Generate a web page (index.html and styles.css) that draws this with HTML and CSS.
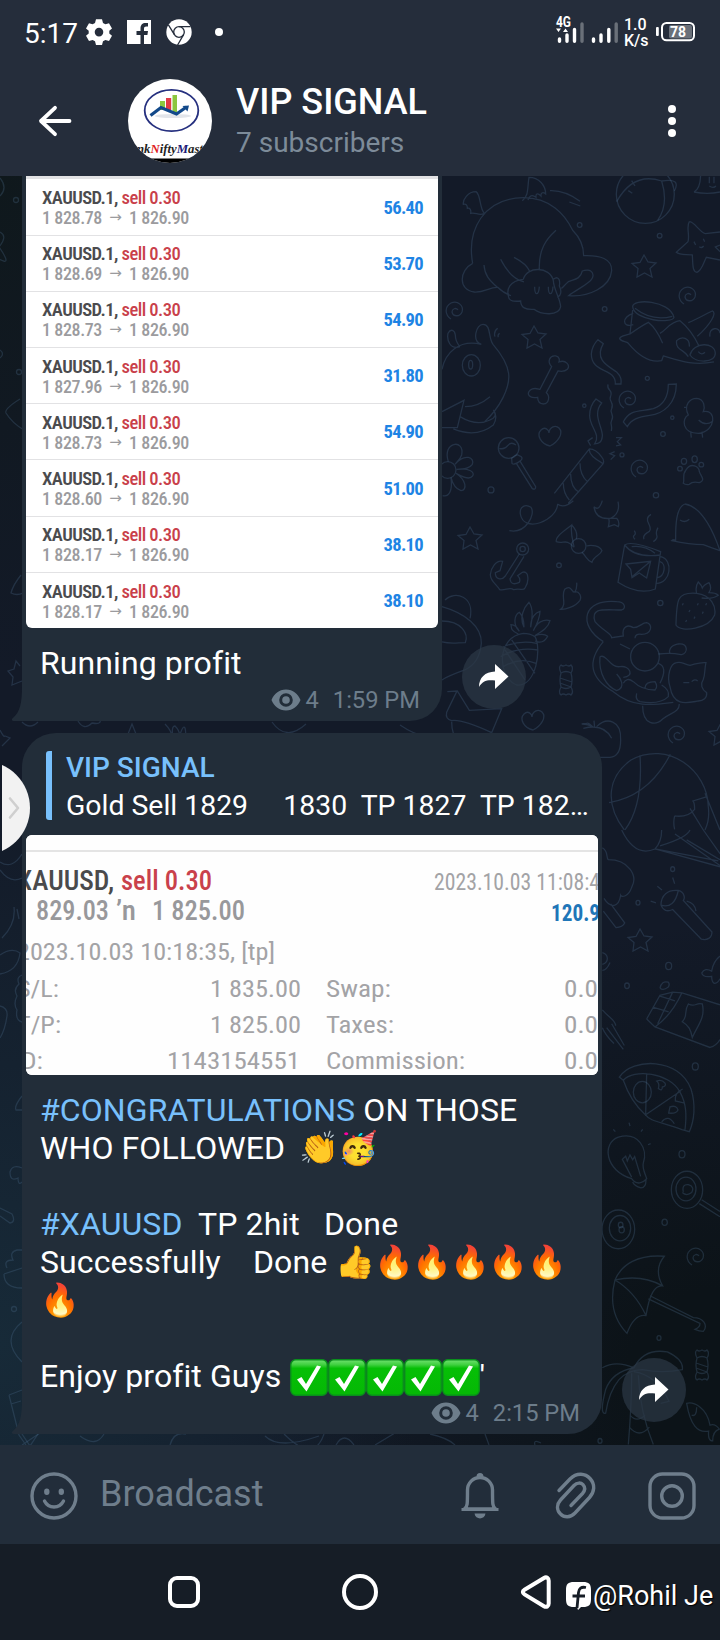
FILE: index.html
```
<!DOCTYPE html>
<html lang="en">
  <head>
    <meta charset="UTF-8" />
    <meta name="viewport" content="width=device-width, initial-scale=1.0" />
    <title>VIP SIGNAL</title>
    <link rel="stylesheet" href="styles.css">
  </head>
  <body>
    <header class="header">
      <div class="status-bar">
        <span class="time">5:17</span>
        <svg class="status-icons" width="140" height="32" viewBox="84 16 140 32">
          <path fill="#fff" fill-rule="evenodd" d="M96 19.3h6l1 3.6 2.4 1.4 3.6-1 3 5.2-2.7 2.3v2.6l2.7 2.3-3 5.2-3.6-1-2.4 1.4-1 3.6h-6l-1-3.6-2.4-1.4-3.6 1-3-5.2 2.7-2.3v-2.6L86 28.500l3-5.200 3.600 1 2.400-1.400zM99 27.800a4.300 4.300 0 1 0 0 8.600 4.300 4.300 0 0 0 0-8.600z" />
          <rect x="127" y="20" width="24" height="24" fill="#fff" />
          <path fill="#252d3b" d="M140.500 44v-9h-4v-4h4v-2.500c0-3.700 2-5.500 5-5.500h2.500v3.500h-1.800c-1.500 0-2.200.7-2.200 2.200V31h4l-.6 4H144v9z" />
          <circle cx="179" cy="32" r="12.700" fill="#fff" />
          <g fill="none" stroke="#252d3b" stroke-width="1.300">
            <circle cx="179" cy="32" r="5.300" />
            <path d="M179 26.700h11.500M174.400 34.700l-6-9.800M183.600 34.700l-6 10.300" />
          </g>
          <circle cx="219" cy="32" r="4" fill="#fff" />
        </svg>
        <svg class="signal" width="66" height="34" viewBox="554 12 66 34">
          <text x="556" y="27" class="net-type" textLength="15" lengthAdjust="spacingAndGlyphs">4G</text>
          <path fill="#fff" d="M556 28.500h5l-2.500 3.500zM563 32h5l-2.500-3.500z" />
          <g stroke="#fff" stroke-width="3.400" stroke-linecap="round">
            <path d="M559.500 39v2.300M567 35v6.300M574.500 29.500v11.800M593.500 39v2.300M601 35v6.300M608.800 29.500v11.800" />
            <path d="M582 24v17.300M616.200 24v17.300" stroke="#6a7079" />
          </g>
        </svg>
        <span class="speed">1.0<br>K/s</span>
        <svg class="battery" width="42" height="22" viewBox="655 20 42 22">
          <rect x="656" y="27" width="2.800" height="9" rx="1" fill="#fff" />
          <rect x="662" y="23" width="32" height="17.300" rx="4.500" fill="none" stroke="#fff" stroke-width="2" />
          <rect x="669" y="25" width="23" height="13.500" rx="2" fill="#6a7079" />
          <text x="678" y="37" class="battery-level" text-anchor="middle">78</text>
        </svg>
      </div>

      <div class="toolbar">
        <svg class="back" width="34" height="32" viewBox="0 0 34 32">
          <path d="M31.500 16H3M17 2.800L3 16l14 13.200" fill="none" stroke="#fff" stroke-width="3.800" stroke-linecap="round" stroke-linejoin="round" />
        </svg>
        <svg class="avatar" width="84" height="84" viewBox="128 79 84 84">
          <rect x="128" y="79" width="84" height="84" fill="#fff" />
          <ellipse cx="171.500" cy="110.500" rx="26.800" ry="20.700" fill="#fff" stroke="#26307f" stroke-width="1.800" />
          <ellipse cx="173" cy="116" rx="18" ry="2" fill="#e2e5ea" />
          <path fill="#8cc63f" d="M160 101h5v9h-5zM172.500 95h4.500v18h-4.500z" />
          <path fill="#e23a45" d="M166 98h5.200v12H166z" />
          <path d="M150.500 115.500l10.500-8 15.500 6.500 10-7" fill="none" stroke="#12498a" stroke-width="3.200" />
          <path fill="#12498a" d="M182.500 106l6.500-.5-1.500 6z" />
          <text class="avatar-text" x="137" y="152.500" textLength="66" lengthAdjust="spacingAndGlyphs">nk<tspan fill="#e01b22">N</tspan>ifty<tspan fill="#1a1a78">M</tspan>ast</text>
          <rect x="128" y="158.500" width="84" height="5" fill="#000" />
        </svg>
        <div class="chat-title">
          <h1>VIP SIGNAL</h1>
          <p>7 subscribers</p>
        </div>
        <div class="menu"><i></i><i></i><i></i></div>
      </div>
    </header>

    <main class="chat">
      <svg class="wallpaper" width="720" height="1269" viewBox="0 176 720 1269">
        <defs>
          <path id="star" d="M0-11l4 7 8 1-6 5.500 2 8.500-7.500-4L-7 11l1-8.500-6-5 8-1z" />
          <path id="spiral" d="M-5 9c-6-4-7-12 0-16 7-3 13 3 11 9-2 5-9 5-10 0 0-3 4-5 6-2" />
          <path id="heart" d="M0 11C-9 9-14 0-9-5c4-4 8 0 8 3 0-5 6-9 10-5 5 5-1 14-9 18z" />
          <g id="candy">
            <path d="M-5-7q5-3 10 0 2 7 0 14-5 3-10 0-2-7 0-14zM-5-7q-3-6 0-8 2 2 5 0 3 2 5 0 3 3 0 8M-5 7q-3 6 0 8 2-2 5 0 3-2 5 0 3-3 0-8M-6-2l12 4M-6 3l11 4" />
          </g>
        </defs>

        <g transform="translate(440 170) scale(.3333)">
          <!-- winged elephant -->
          <path d="M98 280C80 180 130 85 250 83c80 0 125 50 148 98 25 25 33 50 33 76 50-2 85 10 84 45-4 50-70 80-129 75 25-20 75-40 73-62-3-20-25-15-32-12-5 25-25 25-42 32-12 10-16 18-21 20M98 280c-40 20-45 80 5 86 30 2 45-15 70-14 10 10 25 20 40 25M298 298c-2-60 20-90 50-117M132 285c2 30 15 45 40 67M182 268c15 30 40 60 70 68M222 262c20 10 40 25 48 43M250 328c10-40 80-40 90 4 2 30 20 50 22 78-5 30-60 24-80 8-25 2-40-5-40-25-20 2-35 2-37-15-5-20 2-45 45-50M284 350c0 28 12 28 14 0M325 350c0 28 12 28 14 0M340 328c20-15 20 10 18 20 8 15 5 30-6 34M133 130c-15-15-10-55-25-65-25 0-40 25-38 38 10-2 12 5 12 12 8-2 12 5 10 15 15-5 25 10 41 0zM247 92c20-15 15-40 20-70 30 0 50 25 50 50-10-8-15-2-14 6-12-12-16-5-15 4-12-10-20-5-24 8M330 62q45-2 90 32M388 96l33 12" />
          <!-- beach ball -->
          <circle cx="616" cy="73" r="87" />
          <path d="M530 95q50-90 135-62 60-10 38 30M665 33q22 70-12 118M575 32l10 16M565 62l12 8" />
          <!-- ghost, starfish, jar -->
          <path d="M762 66q20-10 20-55M762 66q40 8 78 0M808 20v20M822 20v20M808 48q12 8 20 0M748 155c15 0 30 30 48 36l44-5M748 155c-10 15 2 40-4 60l-35 32c10 10 35 5 48 8 2 30 0 50 14 52 15-5 20-30 28-45l41 8M840 225l-14 6 14 14M762 215l5 10M790 206l4 9M778 230q7 6 13-2" />
          <path d="M578 410c0-25 110-20 124 32-5 20-120 10-124-32zM585 415q50 40 112 24M578 420l-8 72M570 492c-15 5-30 5-31 14 5 10 20 8 26 14 25 30 60 60 100 52l5-14c50 15 90 30 152 18M570 492q35-25 55-35 25 20 43 63M580 430c-35 10-35 45 0 34M660 490c20-10 30-35 60-38 25 20 45 50 57 76M745 458c25-10 60-30 72-35 15 5-5 40-45 76M750 555c10-40 75-40 76-5 0 30-60 30-76 5zM745 560c-10-20-40-20-35-48 15-15 40-10 38 18M810 500c-5-30 30-30 30-10M775 545q10 12 20 2" />
          <!-- bird with cup -->
          <path d="M6 598c10-50 50-90 118-75-30-10-15-60 5-60 25 0 15 40 30 60 60 70 55 110 30 160q-20 40-55 72M60 530c-30 10-40-20-36-40 8-15 20-10 22 5q0 20 14 35M6 725l66-34-20 82H6M75 710q40 0 75-30M60 740q50 30 90 10 25-10 10-30 15 20 0 45-50 40-120 12M165 500q-5-15 8-25M175 502q-3-8 4-12" />
          <ellipse cx="94" cy="586" rx="27" ry="32" />
          <ellipse cx="92" cy="584" rx="6" ry="13" />
          <!-- bone -->
          <path d="M335 590c-15-15-5-35 12-32 12 2 12 12 10 18 20-8 35 10 25 22-8 8-22 6-28 5l-35 65c12 10 8 32-8 34-15 0-18-10-18-20-25 5-35-10-22-22 10-8 20-4 29-2z" />
          <!-- ribbons, lollipop, firecracker -->
          <path d="M474 509l16 12c-30 50 20 70 40 85 15 15 14 25 13 36h-17c2-50-72-30-72-90q2-25 20-43zM685 643l24-1c0 60-40 90-80 94-35 5-55 12-67 34l-12-14c20-40 50-30 90-40 30-10 45-35 45-73zM468 687l17 12c-30 35 5 75 2 100-2 20-12 22-23 23 20-30-15-50-15-85q0-30 19-50zM504 643c-5 20 16 15 8 35-8 15 12 20 3 38-8 12 10 20 0 35-6 12 4 18-1 32" />
          <circle cx="206" cy="834" r="31" />
          <path d="M178 835q15 5 25-8t25-2M215 865q15-15 22-8 15 5 5 15-20 15-26 8zM229 880l48 76q10 5 10-6l-46-75M343 970l105-133q20 0 38 25 8 10 3 20L385 1000M448 837q-3 20 40 43M420 880q0 35 22 55M392 912q0 40 25 55M370 940q0 30 18 50M458 803l-14 10 8 14M528 803h16l-12 12 10 10-14 3M524 845l-14 6 14 6-12 12" />
          <!-- chick, flower, paw -->
          <path d="M745 735c-15-30 5-50 25-50 25 2 25 30 20 40 40-10 40 60-15 65-50 0-50-45-30-55zM776 750q20 20 42 4M740 712h-8M752 785l2 18M786 785l2 18" />
          <circle cx="23" cy="900" r="25" />
          <path d="M25 875c-20-60 50-70 40-20-5 15-15 22-20 28 30-35 60-20 52 0-8 12-30 15-47 15 40-5 55 10 48 20-10 15-35 0-50-8 30 20 35 50 15 52-15-5-25-20-30-40 5 40-5 60-25 55" />
          <path d="M730 940c5-15-5-25 8-40 15-25 40-10 40 5 5 15 20 25 0 33q-20-5-30 5-10 3-18-3z" />
          <ellipse cx="732" cy="874" rx="8" ry="9" /><ellipse cx="764" cy="868" rx="8" ry="10" /><circle cx="784" cy="884" r="7" /><circle cx="720" cy="896" r="7" />
          <circle cx="419" cy="165" r="7" /><circle cx="659" cy="197" r="7" /><circle cx="494" cy="417" r="7" /><circle cx="622" cy="625" r="6" /><circle cx="669" cy="792" r="7" /><circle cx="546" cy="855" r="6" /><circle cx="153" cy="960" r="9" /><circle cx="648" cy="976" r="8" /><circle cx="433" cy="707" r="5" /><circle cx="697" cy="743" r="5" />
        </g>
        <use href="#star" x="644" y="266" /><use href="#star" x="534" y="337" />
        <use href="#spiral" x="456" y="310" /><use href="#spiral" x="689" y="295" /><use href="#spiral" x="629" y="399" /><use href="#spiral" x="641" y="468" />
        <use href="#heart" x="550" y="435" />

        <g transform="translate(440 500) scale(.3333)">
          <!-- string, fish, bow tie -->
          <path d="M208 92c50 10 80-50 65-70-15-10-35-5-32 20 10 60 110 20 112-30M352 12q20 15 48-10M462 20q5 40 50 35 30-15 22-50M462 20q15 15 25-18M505 80q5-20 0-25h25q10 10 5 25l-12-6zM395 75c-25 20-50 35-46 50 20 8 30-10 50 14 10 10-10-30-4-64zM395 75q20 20 14 42M440 138c15-5 40 0 46 14-5 15-25 15-30 35-15-5-15-15-30-30" />
          <circle cx="416" cy="138" r="22" />
          <!-- mug -->
          <path d="M554 135q20-15 108 20l-16 112q-50 20-112-20zM554 135q30 40 108 30M575 140q40-5 70 20M662 170c40 10 30 80-12 80M660 185c20 5 15 45-8 48M558 192l74-8-12 50-22-15-22 14-4-25zM632 184l-56 46M585 118q-8-8-2-12 6-5 0-14M612 118q-5-10 10-20 15-5 5-25-12-20 6-30M640 125q15-10 10-20-3-10 4-22" />
          <!-- anchor -->
          <circle cx="248" cy="147" r="18" /><circle cx="248" cy="147" r="8" />
          <path d="M238 162l-42 66c-12 15-30 10-30-10l14-6 8-28c-20-5-35 20-37 40 0 20 20 30 28 45 15 5 30-10 42 0 20-5 30 5 34-5 10-15 10-25 8-35 0-10-8-15-16-12l-14 10q10 10 5 20-25 12-28-10l42-68" />
          <!-- cake, leaf, strawberry -->
          <path d="M735 12c-30 10-28 80-28 110M735 12q60 10 105 140-30-10-50-18-40 0-95-12 5-5 12-1M720 60q15 10 28-2M362 328c20-15 0-40 12-60 15-12 20 0 26 8 20-5 25 15 20 25-15 20-45 28-58 27zM410 248q2 15-6 30M770 280c-60-5-60 20-62 95 15 25 100 10 116-30 5-25-10-60-54-65zM770 280q-5-20 5-34 10 10 12 18 5-10 20-16 10 15 0 30 20 0 28 8-15 12-50 8M730 310l-3 6M750 330l-3 6M775 310l-3 6M740 360l-3 6M765 350l-3 6M790 335l-3 6M800 310l-3 6" />
          <!-- pineapple -->
          <path d="M250 400c-80 10-80 130-20 155 60 5 75-110 55-145q-15-10-35-10zM235 402c-25-10-20-20-22-28 12 0 20 10 25 20-20-20-15-50 0-57 10 10 14 30 14 45-15-30 0-60 15-75 12 15 12 40 5 75 0-30 15-45 28-48 0 20-10 40-20 58 10-25 30-35 50-30-5 20-20 30-45 45 15-5 30-5 38 2-10 20-25 20-38 14M190 440q50-20 100-10M182 470q50-30 112-20M190 500q50-30 98-10M215 420l70 100M195 450l60 90" />
          <!-- bear and letter -->
          <path d="M15 300c30-30 90-10 75 55M6 320c70 20 120 60 118 110q-5 60-50 80Q20 530 6 540M6 363c60 0 80 40 70 65-25 0-40 5-70-2M22 575l30-2 36 58 97-5-30 72M50 575l-30 62q-5 20 15 25 30-5 120 36M35 665q0 20 5 35" />
          <!-- cat on its back -->
          <path d="M490 425c-80-50-60-130 40-120 25 0 30 20 15 25-50 0-95-10-80 35 20 25 50 35 50 48l35-5c-5-30 15-35 30-25 20 0 25-15 40-15 20 5 15 35-15 35q-20-3-20 12M490 425c-50 60-40 110 30 150 60 50 120 40 180 32M480 470c20-10 30 35 60 30 30-5 45 30 10 32M480 470c-5 50 20 90 50 102 30-10 10-40 0-50M540 432l30 15M655 462c40-5 60 0 70 2 20-5 20-35-10-32-25 5-30 20-25 30M690 560c-10-30 0-70 20-72 15-5 20 5 40 8 20-5 30-10 48-8-5 20-2 35-8 50-10 15-5 30 10 40 2 15-10 25-25 25-30 5-75 20-85-43zM608 617c0 60 40 60 60 40 25-20 50-20 50-45M550 550q10-20 30-5 25 25 65 25 10-10 0-25-30 0-30 20M590 580q-5 20 10 25 60 10 85-15 5-20-20-35M655 490q30 10 5 60M730 548h18M755 545q10-10 18-2" />
          <circle cx="615" cy="470" r="43" />
          <!-- peach, football -->
          <path d="M430 685c40-10 70 0 85 30M425 672q20 0 35 10-15-15-20-12-10 0-15 2M462 662l2 22M470 680c30-30 75-20 72 40q0 50-32 52h-30" />
          <path d="M553 990c-60-80-50-160 20-210 110-60 230 30 232 140 5 40-5 60-10 70M507 908q120-20 184-145M600 766q10 150-45 224M704 948q-5 20 0 40M704 948q40 5 60-20 0-20-5-25l40-12M795 880l45 110M750 925l40 65" />
          <circle cx="357" cy="196" r="7" /><circle cx="661" cy="309" r="8" />
        </g>
        <use href="#star" x="470" y="538" /><use href="#heart" x="533" y="719" />
        <use href="#spiral" x="678" y="734" /><use href="#star" x="721" y="734" />
        <use href="#candy" x="566" y="680" />

        <g transform="translate(560 830) scale(.3333 .3954)">
          <!-- parachute, tree, torch -->
          <path d="M185 0q40 70 100 48l195 45M305 0q0 30-20 48M300 40q80-20 90-40M285 48l190 30M345 10l135 80M380 25l100 50M430 0l50 60M127 45c20 10 10 25 18 30 60 0 90 40 70 70-10 25-30 25-33 20-5 30-30 35-50 8M130 205l38 42q20-2 26-12l-42-48M303 190c0-25 20-40 52-37 20 5 20 20 15 25l86 80c0 15-15 22-32 18l-86-75q-25 10-35-11zM303 190q40 10 52-37M380 180q25 5 28 25M338 120l6 16M292 142l14 10M272 180l16 4M127 310c20 5 20 25 0 30M150 335q-10 20-23 20" />
          <!-- chocolate, whale -->
          <path d="M260 478l40-60 38-8 28 2 114 30M260 478l25 20 165 52q20-5 30-20M285 498q50-30 80-85M300 420l45 12M278 448l48 12M338 410l-45 80M385 440c-15 20 0 30-18 45 20 10 25 20 30 40 15-30 40-50 30-85-20-5-20 10-42 0zM425 362q10-15 30-5 5-25 25-38M425 362q5 12 30 8 0 15 8 18 10 0 17-12M300 400q5-20 25-15 5 5 0 12-15 10-25 3M127 455c20 20 40 25 40 40M140 500l50 55M155 490l38 55M127 500q10 20 35 40" />
          <!-- pizza -->
          <path d="M178 625c40-50 180-50 215 30 15 40 10 80-5 108l-22-5c-60-20-95-20-110-38-40-30-55-60-66-87zM190 633c30-30 140-20 170 30 20 30 20 60 15 95M260 615l-3 105 105-60M290 635q15-5 25 5 5 8-8 10 0 12-12 4 5-12-5-19zM330 700q20-5 24 8-5 10-28 8zM305 738q20-20 38 5M368 655q-25 10-22 30l25 5" />
          <circle cx="247" cy="663" r="27" />
          <!-- light bulb, lollipop -->
          <path d="M215 882c-80-20-90-90-40-105 60-15 90 30 75 65-5 15 10 35 10 40-10 10-30 18-45 0zM215 878l-28-45 10-8 5 12 8-15 8 12 6-8 18 50M218 890q5 10 25 15 15 0 15-20M160 757l6 6M207 740l3 9M248 757l-5 6M272 793l-8 3" />
          <circle cx="381" cy="910" r="47" /><circle cx="378" cy="908" r="30" />
          <path d="M370 915q-5-20 15-18 20 5 10 20-15 10-28 0M425 935l55 30M418 945l62 33" />
          <!-- eight ball, umbrella -->
          <circle cx="175" cy="1010" r="49" /><circle cx="180" cy="1007" r="32" /><circle cx="182" cy="999" r="7" /><circle cx="185" cy="1011" r="8" />
          <path d="M165 1138c20-40 70-65 148-60-20 20-25 45-5 75q-35-5-50 75-35-5-57 45c-45-40-50-90-36-135zM165 1138q80-15 143 15M165 1138q60 30 93 90M270 1178l130 55c30 0 45 20 30 35q-12 0-25-5 15-5 15-15l-155-62" />
          <!-- palm tree, fish -->
          <path d="M127 1360q40-20 95 0 30-50 100-40 50 20 45 45-60 10-120 0-40 0-70 25-30 30-40 85-20 5 0-60 20-45 85-55M222 1370q70 10 105 75l-25 5M205 1554q10-100 10-180M280 1554q-40-80-45-175M210 1480q20 20 45 0M208 1510q30 30 60 0M380 1450c20-5 60 10 70 55q15-5 28 10-20 5-20 30-15 0-12-25-50 10-66-70zM395 1480q15 5 15-20" />
          <circle cx="338" cy="99" r="6" /><circle cx="234" cy="184" r="6" /><circle cx="326" cy="344" r="9" /><circle cx="201" cy="394" r="7" /><circle cx="406" cy="598" r="9" /><circle cx="366" cy="820" r="9" /><circle cx="314" cy="992" r="8" /><circle cx="297" cy="1285" r="6" /><circle cx="120" cy="1545" r="6" />
        </g>
        <use href="#star" x="640" y="940" /><use href="#spiral" x="697" y="1256" /><use href="#candy" x="702" y="1365" />

        <!-- left edge -->
        <path d="M0 178q8 10 0 18M0 232q8 4-1 15 14 20 0 12M20 399q-16 10-14 14 6 10 18 17M0 350q5 4 0 8M21 575q-8 10-10 18 6 3 12 0M0 730q4 8 5 6l5 2-8 8M20 666l-4-5-2 8-6 2 5 6-1 8 10-4" />
        <circle cx="16" cy="200" r="2.500" /><circle cx="19" cy="372" r="2.500" /><circle cx="14" cy="1309" r="2.500" />
        <path d="M0 870q10 14 22 8M0 862q12 8 22-8M2 938q14-14 12-31M17 909l2 10M0 955q12-8 20-2-2 18-20 21M22 975q-6 2-3 9-6 5-2 12-4 8 0 14-2 10 5 12M0 1006q8 2 7 10-2 14-7 22M22 1096q-8 10-6 14h6M22 1168q-10-4-12 4 0 10 8 6 0 8 4 4M0 1208l12 6q4 8-2 9l-10-7M4 1274q0 14 18 14M4 1274l18-6M7 1268q-4-8 6-8-4-8 4-10h5M22 1322q-22 18 0 40M9 1395l10 40 7 10M9 1395l13-5M11 1404l10-3M22 1445l18-12" />
        <path d="M22 722q8 8 16 0M78 721q6 10 14 2 10 2 8-4M128 734l4-10 4 10M165 724q6 6 8 14-2-12 2-12 6 6 4 12 4-14 6-10 2 8-2 10M272 722q14 20 34 2M400 725q18 12 26 10M284 1434q30 30 40 0M170 1445q4-14 16-11M22 1434l8 12 8-12M80 1436q16 12 24-2M265 1436q14 14 54 0M336 1445q8-14 18 0M375 1445l20-12M430 1434q18 4 25 11M485 1434l4 11M535 1445q-2-6 6-2" />
      </svg>

      <section class="message message-first">
        <div class="photo deals">
          <div class="deal">
            <div>
              <p class="deal-name">XAUUSD.1, <b>sell 0.30</b></p>
              <p class="deal-price"><span>1 828.78</span><i>→</i><span>1 826.90</span></p>
            </div>
            <strong>56.40</strong>
          </div>
          <div class="deal">
            <div>
              <p class="deal-name">XAUUSD.1, <b>sell 0.30</b></p>
              <p class="deal-price"><span>1 828.69</span><i>→</i><span>1 826.90</span></p>
            </div>
            <strong>53.70</strong>
          </div>
          <div class="deal">
            <div>
              <p class="deal-name">XAUUSD.1, <b>sell 0.30</b></p>
              <p class="deal-price"><span>1 828.73</span><i>→</i><span>1 826.90</span></p>
            </div>
            <strong>54.90</strong>
          </div>
          <div class="deal">
            <div>
              <p class="deal-name">XAUUSD.1, <b>sell 0.30</b></p>
              <p class="deal-price"><span>1 827.96</span><i>→</i><span>1 826.90</span></p>
            </div>
            <strong>31.80</strong>
          </div>
          <div class="deal">
            <div>
              <p class="deal-name">XAUUSD.1, <b>sell 0.30</b></p>
              <p class="deal-price"><span>1 828.73</span><i>→</i><span>1 826.90</span></p>
            </div>
            <strong>54.90</strong>
          </div>
          <div class="deal">
            <div>
              <p class="deal-name">XAUUSD.1, <b>sell 0.30</b></p>
              <p class="deal-price"><span>1 828.60</span><i>→</i><span>1 826.90</span></p>
            </div>
            <strong>51.00</strong>
          </div>
          <div class="deal">
            <div>
              <p class="deal-name">XAUUSD.1, <b>sell 0.30</b></p>
              <p class="deal-price"><span>1 828.17</span><i>→</i><span>1 826.90</span></p>
            </div>
            <strong>38.10</strong>
          </div>
          <div class="deal">
            <div>
              <p class="deal-name">XAUUSD.1, <b>sell 0.30</b></p>
              <p class="deal-price"><span>1 828.17</span><i>→</i><span>1 826.90</span></p>
            </div>
            <strong>38.10</strong>
          </div>
        </div>
        <p class="caption">Running profit</p>
        <div class="meta">
          <svg width="30" height="22" viewBox="0 0 30 22"><path fill="#6d7d8b" fill-rule="evenodd" d="M15 .5C8 .5 3 5 .5 11 3 17 8 21.500 15 21.500S27 17 29.500 11C27 5 22 .5 15 .5zM15 4.200a6.800 6.800 0 1 1 0 13.600 6.800 6.800 0 0 1 0-13.600zM15 7.200a3.800 3.800 0 1 0 0 7.600 3.800 3.800 0 0 0 0-7.600z" /></svg>
          <span class="views">4</span>
          <span>1:59 PM</span>
        </div>
        <svg class="tail" width="14" height="34" viewBox="0 0 14 34"><path fill="#222d39" d="M14 0h-4c0 16-2 25-9 31-2 1-1 3 1 3h12z" /></svg>
        <button class="share" aria-label="Share">
          <svg width="32" height="28" viewBox="0 0 32 28"><path fill="#fff" d="M17 1l13.500 12.500L17 26v-8.500C9 16.500 4.500 18 1 24 1 14.500 7 9 17 8.500z" /></svg>
        </button>
      </section>

      <section class="message message-second">
        <div class="reply">
          <p class="reply-name">VIP SIGNAL</p>
          <p class="reply-text">Gold Sell 1829     1830  TP 1827  TP 182…</p>
        </div>
        <svg class="photo order" width="572" height="240" viewBox="26 835 572 240">
          <rect x="26" y="835" width="572" height="240" fill="#fefefe" />
          <rect x="26" y="850" width="572" height="2" fill="#e4e4e4" />
          <g class="order-bold">
            <text x="17" y="890" font-size="28" fill="#4a4a4c" textLength="97" lengthAdjust="spacingAndGlyphs">XAUUSD,</text>
            <text x="121" y="890" font-size="28" fill="#c9414b" textLength="91" lengthAdjust="spacingAndGlyphs">sell 0.30</text>
            <text x="36" y="920" font-size="27" fill="#98989b" textLength="73" lengthAdjust="spacingAndGlyphs">829.03</text>
            <text x="116" y="920" font-size="27" fill="#98989b" textLength="20" lengthAdjust="spacingAndGlyphs">’n</text>
            <text x="152" y="920" font-size="27" fill="#98989b" textLength="93" lengthAdjust="spacingAndGlyphs">1 825.00</text>
            <text x="551" y="921" font-size="24" font-weight="700" fill="#1f76b8" textLength="49" lengthAdjust="spacingAndGlyphs">120.9</text>
          </g>
          <g class="order-grey">
            <text x="434" y="890" textLength="166" lengthAdjust="spacingAndGlyphs">2023.10.03 11:08:4</text>
            <text x="17" y="960" textLength="258" lengthAdjust="spacingAndGlyphs">2023.10.03 10:18:35, [tp]</text>
            <text x="17" y="997" textLength="42" lengthAdjust="spacingAndGlyphs">S/L:</text>
            <text x="210" y="997" textLength="91" lengthAdjust="spacingAndGlyphs">1 835.00</text>
            <text x="326" y="997" textLength="65" lengthAdjust="spacingAndGlyphs">Swap:</text>
            <text x="564" y="997" textLength="34" lengthAdjust="spacingAndGlyphs">0.0</text>
            <text x="17" y="1033" textLength="44" lengthAdjust="spacingAndGlyphs">T/P:</text>
            <text x="210" y="1033" textLength="91" lengthAdjust="spacingAndGlyphs">1 825.00</text>
            <text x="326" y="1033" textLength="68" lengthAdjust="spacingAndGlyphs">Taxes:</text>
            <text x="564" y="1033" textLength="34" lengthAdjust="spacingAndGlyphs">0.0</text>
            <text x="21" y="1069" textLength="22" lengthAdjust="spacingAndGlyphs">D:</text>
            <text x="167" y="1069" textLength="133" lengthAdjust="spacingAndGlyphs">1143154551</text>
            <text x="326" y="1069" textLength="139" lengthAdjust="spacingAndGlyphs">Commission:</text>
            <text x="564" y="1069" textLength="34" lengthAdjust="spacingAndGlyphs">0.0</text>
          </g>
        </svg>
        <svg class="defs" width="0" height="0">
          <defs>
            <linearGradient id="green" x1="0" y1="0" x2="0" y2="1">
              <stop offset="0" stop-color="#6fe06f" />
              <stop offset=".14" stop-color="#3fd03f" />
              <stop offset=".24" stop-color="#06bf06" />
              <stop offset="1" stop-color="#05b805" />
            </linearGradient>
            <g id="check">
              <rect x=".8" y=".8" width="36.500" height="35.500" rx="5" fill="url(#green)" stroke="#0a8f1c" stroke-width="1.400" />
              <path d="M7 20.500l4.500-2.500 4.500 7L27 6.500l4 1-14.500 25z" fill="#fff" />
            </g>
          </defs>
        </svg>
        <p class="caption"><a>#CONGRATULATIONS</a> ON THOSE
WHO FOLLOWED  <span class="emoji clap">👏🥳</span>

<a>#XAUUSD</a>  TP 2hit   Done
Successfully    Done <span class="emoji">👍🔥🔥🔥🔥🔥
🔥</span>

Enjoy profit Guys <svg class="check"><use href="#check" /></svg><svg class="check"><use href="#check" /></svg><svg class="check"><use href="#check" /></svg><svg class="check"><use href="#check" /></svg><svg class="check"><use href="#check" /></svg>'</p>
        <div class="meta">
          <svg width="30" height="22" viewBox="0 0 30 22"><path fill="#6d7d8b" fill-rule="evenodd" d="M15 .5C8 .5 3 5 .5 11 3 17 8 21.500 15 21.500S27 17 29.500 11C27 5 22 .5 15 .5zM15 4.200a6.800 6.800 0 1 1 0 13.600 6.800 6.800 0 0 1 0-13.600zM15 7.200a3.800 3.800 0 1 0 0 7.600 3.800 3.800 0 0 0 0-7.600z" /></svg>
          <span class="views">4</span>
          <span>2:15 PM</span>
        </div>
        <svg class="tail" width="14" height="34" viewBox="0 0 14 34"><path fill="#222d39" d="M14 0h-4c0 16-2 25-9 31-2 1-1 3 1 3h12z" /></svg>
        <button class="share" aria-label="Share">
          <svg width="32" height="28" viewBox="0 0 32 28"><path fill="#fff" d="M17 1l13.500 12.500L17 26v-8.500C9 16.500 4.500 18 1 24 1 14.500 7 9 17 8.500z" /></svg>
        </button>
      </section>

      <!-- edge panel handle -->
      <div class="edge-handle">
        <svg width="12" height="24" viewBox="0 0 12 24"><path d="M2 2.500l8 9.500-8 9.500" fill="none" stroke="#cfcfcf" stroke-width="2.600" stroke-linecap="round" stroke-linejoin="round" /></svg>
      </div>
    </main>

    <div class="composer">
      <svg width="48" height="48" viewBox="0 0 48 48" fill="none" stroke="#6f7e8c" stroke-width="3.400">
        <circle cx="24" cy="24" r="22" />
        <path d="M14.500 29c4 8 15 8 19 0" stroke-linecap="round" />
        <ellipse cx="16.800" cy="19.800" rx="2.700" ry="3.300" fill="#6f7e8c" stroke="none" />
        <ellipse cx="31.300" cy="19.800" rx="2.700" ry="3.300" fill="#6f7e8c" stroke="none" />
      </svg>
      <span class="placeholder">Broadcast</span>
      <svg width="40" height="48" viewBox="0 0 40 48">
        <path d="M4.500 36c3-2 3-5 3-19a12.500 12.500 0 0 1 25 0c0 14 0 17 3 19z" transform="translate(0 1)" fill="none" stroke="#6f7e8c" stroke-width="3.400" stroke-linejoin="round" />
        <path d="M16.500 4.500a3.400 3.400 0 0 1 7 0zM14.500 41.500h11c-1 6.500-10 6.500-11 0zM1.500 36h37v3h-37z" fill="#6f7e8c" />
      </svg>
      <svg class="clip" width="42" height="48" viewBox="555 1472 42 48">
        <path d="M559 1490.500l11-11.500c7-7 15.500-5.500 20-.5 5.500 6 4.500 13.500-.5 19l-14.500 15.500c-4.500 5-11 4.500-14.500 1-4-4-4-9.500 0-14l13.500-14.500c3-3.200 7-3 9-.8 2.500 2.800 2 6-.5 8.800L571 1505.500" fill="none" stroke="#6f7e8c" stroke-width="3.400" stroke-linecap="round" />
      </svg>
      <svg width="48" height="48" viewBox="0 0 48 48" fill="none" stroke="#6f7e8c" stroke-width="3.400">
        <rect x="2" y="2" width="44" height="44" rx="12.500" />
        <circle cx="24" cy="24" r="10.300" />
      </svg>
    </div>

    <nav class="nav-bar">
      <svg width="36" height="36" viewBox="0 0 36 36"><rect x="4" y="4" width="28" height="28" rx="7" fill="none" stroke="#fff" stroke-width="4" /></svg>
      <svg width="36" height="36" viewBox="0 0 36 36"><circle cx="18" cy="18" r="16" fill="none" stroke="#fff" stroke-width="4" /></svg>
      <svg width="36" height="36" viewBox="-2 0 36 36"><path d="M4.500 15.800L24 4c2.500-1.500 4.700 0 4.700 2.700v22.800c0 2.700-2.200 4.200-4.700 2.700L4.500 20.400c-2.200-1.300-2.200-3.300 0-4.600z" fill="none" stroke="#fff" stroke-width="4" /></svg>
      <div class="watermark">
        <svg width="25" height="28" viewBox="0 0 25 28">
          <path fill="#fff" d="M8 0h9c6 0 8 2 8 8v9c0 6-2 8-8 8h-2l-3 3-1-3H8c-6 0-8-2-8-8V8c0-6 2-8 8-8z" />
          <path d="M20 5.500c-5-1-7 1-7.500 5L11 26M6.500 14H19" fill="none" stroke="#161d26" stroke-width="2.800" />
        </svg>
        <span>@Rohil Je</span>
      </div>
    </nav>
  </body>
</html>
```

FILE: styles.css
```
* {
  box-sizing: border-box;
  margin: 0;
  padding: 0;
}

body {
  display: flex;
  flex-direction: column;
  width: 720px;
  height: 1640px;
  overflow: hidden;
  background: #161d26;
  color: #fff;
  font-family: Roboto, "Liberation Sans", sans-serif;
}

svg {
  display: block;
  flex-shrink: 0;
}

/* header */
.header {
  height: 176px;
  background: #252d3b;
}

.status-bar {
  display: flex;
  align-items: center;
  height: 64px;
  padding-left: 24px;
}

.time {
  width: 60px;
  font-size: 28px;
  line-height: 32px;
  padding-top: 3px;
}

.signal {
  margin: -6px 0 0 330px;
}

.net-type {
  font: 700 14px Roboto, sans-serif;
  fill: #fff;
}

.speed {
  width: 35px;
  padding: 2px 0 0 4px;
  font-size: 16px;
  font-weight: 500;
  line-height: 16px;
}

.battery {
  margin-top: -2px;
}

.battery-level {
  font: 700 14px Roboto, sans-serif;
  fill: #fff;
}

.toolbar {
  display: flex;
  align-items: center;
  height: 112px;
  padding: 1px 40px 0 38px;
}

.avatar {
  margin-left: 56px;
  border-radius: 50%;
}

.avatar-text {
  font: italic 700 11.5px "Liberation Serif", serif;
  fill: #222;
}

.chat-title {
  margin-left: 24px;
}

.chat-title h1 {
  font-size: 36px;
  font-weight: 500;
  line-height: 42px;
}

.chat-title p {
  margin-top: 1px;
  color: #7d8b99;
  font-size: 28px;
  line-height: 37px;
}

.menu {
  display: flex;
  flex-direction: column;
  gap: 4px;
  margin-left: auto;
  margin-right: 4px;
}

.menu i {
  width: 8px;
  height: 8px;
  border-radius: 50%;
  background: #fff;
}

/* chat */
.chat {
  position: relative;
  height: 1269px;
  overflow: hidden;
  background:
    radial-gradient(ellipse 420px 560px at 0% 92%, #172a38, rgba(23, 42, 56, 0)),
    radial-gradient(ellipse 300px 500px at 0% 0%, #0f181c, rgba(15, 24, 28, 0)),
    radial-gradient(ellipse 460px 460px at 100% 95%, #0c1318 20%, rgba(12, 19, 24, 0)),
    #131a28;
}

.wallpaper {
  position: absolute;
  top: 0;
  left: 0;
  fill: none;
  stroke: rgba(88, 122, 158, 0.25);
  stroke-width: 1.3px;
}

.wallpaper * {
  vector-effect: non-scaling-stroke;
}

.message {
  position: relative;
  margin-left: 22px;
  padding: 0 4px 7px;
  background: #222d39;
}

.message-first {
  width: 420px;
  border-radius: 0 0 32px 0;
}

.message-second {
  width: 580px;
  margin-top: 12px;
  padding-top: 18px;
  border-radius: 34px 34px 34px 0;
}

.photo {
  overflow: hidden;
  background: #fff;
}

.deals {
  height: 452px;
  padding-top: 3.5px;
  border-radius: 0 0 6px 6px;
  background: linear-gradient(#e2e2e4 3px, #fff 3px);
}

.deal {
  display: flex;
  justify-content: space-between;
  align-items: center;
  height: 56.2px;
  padding: 1px 15px 0 16px;
  border-bottom: 1px solid #e2e2e4;
  font-family: "Roboto Condensed", Roboto, sans-serif;
}

.deal:last-child {
  border-bottom: 0;
}

.deal-name {
  color: #4b4b4e;
  font-size: 18.6px;
  font-weight: 600;
  letter-spacing: -0.55px;
  line-height: 20px;
}

.deal-name b {
  color: #c9404a;
  font-weight: 500;
}

.deal-price {
  display: flex;
  color: #9b9b9e;
  font-size: 18px;
  font-weight: 500;
  letter-spacing: -0.4px;
  line-height: 19px;
}

.deal-price i {
  width: 27px;
  font-family: "DejaVu Sans", sans-serif;
  font-size: 15px;
  font-style: normal;
  text-align: center;
}

.deal strong {
  color: #1e84e4;
  font-size: 18.6px;
  font-weight: 700;
  letter-spacing: -0.7px;
}

.caption {
  margin: 16px 0 4px 14px;
  font-size: 32px;
  letter-spacing: 0.1px;
  line-height: 38px;
  white-space: pre;
}

.caption a {
  color: #78c0fc;
}

.emoji {
  font-size: 32px;
  letter-spacing: -1.7px;
}

.clap {
  margin-left: -2px;
}

.check {
  display: inline-block;
  width: 38px;
  height: 38px;
  margin-bottom: -2px;
  vertical-align: -8px;
}

.meta {
  display: flex;
  align-items: center;
  justify-content: flex-end;
  margin-right: 18px;
  color: #6d7d8b;
  font-size: 23.7px;
  line-height: 28px;
}

.views {
  margin: 0 14px 0 4px;
}

.tail {
  position: absolute;
  left: -10px;
  bottom: 0;
}

.share {
  position: absolute;
  right: -84px;
  bottom: 12px;
  display: flex;
  align-items: center;
  justify-content: center;
  width: 64px;
  height: 64px;
  border: 0;
  border-radius: 50%;
  background: rgba(43, 56, 69, 0.72);
}

.reply {
  height: 69px;
  margin-left: 20px;
  padding-left: 14px;
  border-left: 6px solid #78c0fc;
  border-radius: 3px;
  font-size: 28px;
  line-height: 33px;
}

.reply-name {
  margin-bottom: 5px;
  color: #78c0fc;
  font-weight: 500;
}

.reply-text {
  font-size: 28.4px;
  white-space: pre;
}

.order {
  margin-top: 15px;
  border-radius: 6px;
}

.order-bold {
  font-family: "Roboto Condensed", Roboto, sans-serif;
  font-weight: 500;
}

.order-grey {
  font-family: "Roboto Condensed", Roboto, sans-serif;
  font-size: 24.5px;
  fill: #a3a3a6;
}

.defs {
  position: absolute;
}

.edge-handle {
  position: absolute;
  top: 585px;
  left: 2px;
  display: flex;
  align-items: center;
  width: 28px;
  height: 94px;
  padding-left: 6px;
  background: #f2f2f2;
  clip-path: circle(47px at -19px 47px);
}

/* composer */
.composer {
  display: flex;
  align-items: center;
  height: 99px;
  padding: 3px 24px 0 30px;
  background: #222d3a;
}

.placeholder {
  width: 360px;
  margin: -4px 0 0 22px;
  color: #6f7e8c;
  font-size: 36px;
}

.clip {
  margin: 0 51px 0 55px;
}

/* system navigation */
.nav-bar {
  display: flex;
  align-items: center;
  height: 96px;
  padding-left: 166px;
}

.nav-bar > svg + svg {
  margin-left: 140px;
}

.watermark {
  display: flex;
  align-items: center;
  gap: 2px;
  margin-left: 12px;
  padding-top: 8px;
  font-size: 27px;
  text-shadow: 1px 1px 1px #000;
}
```
